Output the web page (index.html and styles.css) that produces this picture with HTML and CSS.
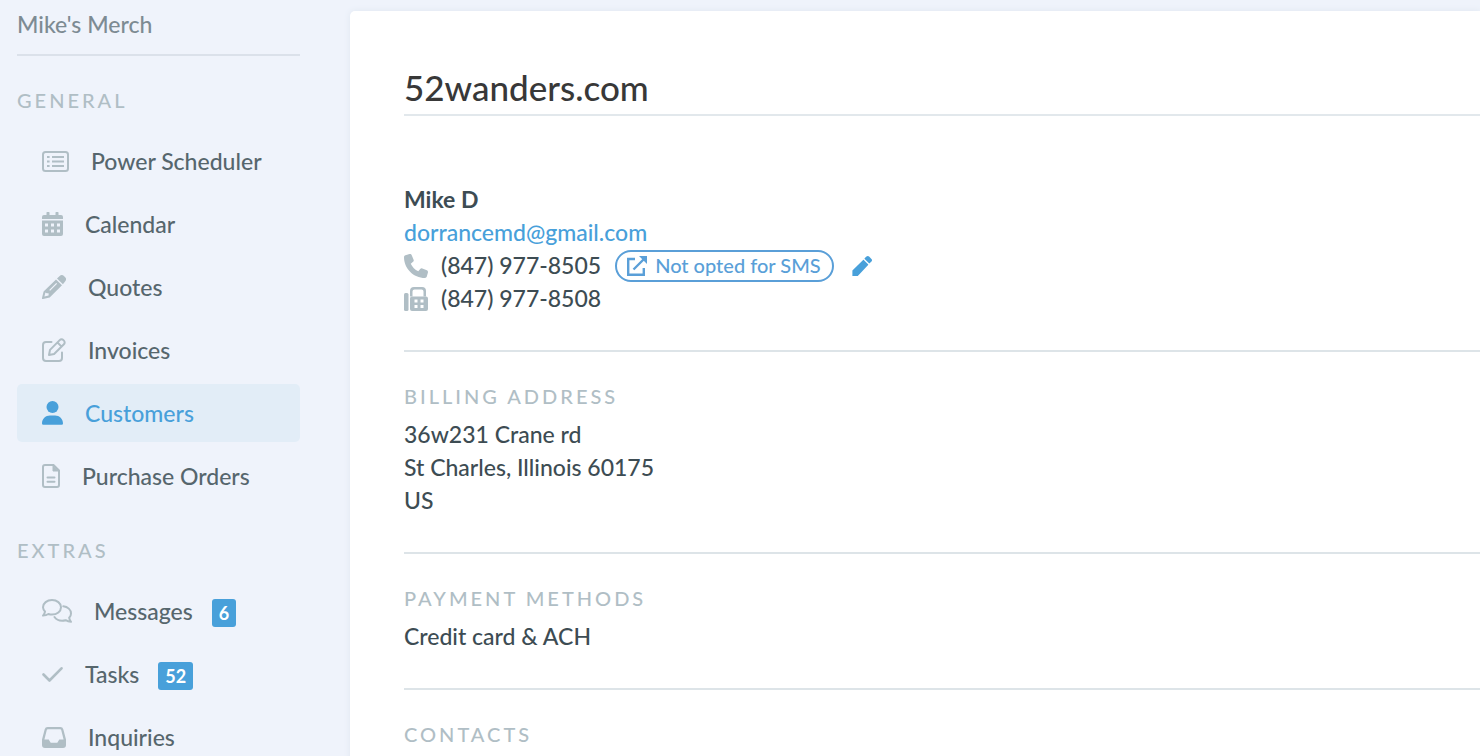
FILE: index.html
```html
<!DOCTYPE html>
<html lang="en">
<head>
<meta charset="utf-8">
<title>52wanders.com</title>
<link rel="stylesheet" href="styles.css">
</head>
<body>
<div class="app">
  <aside class="sidebar">
    <div class="brand">Mike's Merch</div>
    <nav class="nav">
      <h2 class="label">General</h2>
      <ul class="nav-list">
        <li><a class="nav-item" href="#">
          <svg class="icon" width="27" height="24" viewBox="0 0 27 24" fill="none" stroke="currentColor" stroke-width="2"><rect x="1" y="3" width="25" height="19" rx="2.5"/><path d="M10 8h12M10 12.500h12M10 17h12M5 8h2.600M5 12.500h2.600M5 17h2.600"/></svg>
          <span>Power Scheduler</span></a></li>
        <li><a class="nav-item" href="#">
          <svg class="icon" width="21" height="24" viewBox="0 0 21 24" fill="currentColor"><path fill-rule="evenodd" d="M4.500 1a1 1 0 0 1 3 0v2h6V1a1 1 0 0 1 3 0v2H19a2 2 0 0 1 2 2v2H0V5a2 2 0 0 1 2-2h2.500zM0 8.500h21V22a2 2 0 0 1-2 2H2a2 2 0 0 1-2-2zM3 11.500v3h3v-3zm6 0v3h3v-3zm6 0v3h3v-3zM3 17.500v3h3v-3zm6 0v3h3v-3zm6 0v3h3v-3z"/></svg>
          <span>Calendar</span></a></li>
        <li><a class="nav-item" href="#">
          <svg class="icon" width="24" height="24" viewBox="0 0 24 24" fill="currentColor"><path fill-rule="evenodd" d="M14 4.500 20 10.300 7.700 22.400 1 24a.9.9 0 0 1-1-1l1.600-6.600zM3.400 17.500l-1 4 4.200-1.100v-2.200H4.800zM7.200 14.900l.9.900 7-7-.9-.9z"/><path d="M15 3.500 17.400 1.200a3.400 3.400 0 0 1 4.800 0l.7.700a3.400 3.400 0 0 1 0 4.800L20.900 9.300z"/></svg>
          <span>Quotes</span></a></li>
        <li><a class="nav-item" href="#">
          <svg class="icon" width="24" height="24" viewBox="0 0 24 24" fill="none" stroke="currentColor" stroke-width="2" stroke-linecap="round" stroke-linejoin="round"><path d="M9.500 4H4a3 3 0 0 0-3 3v13a3 3 0 0 0 3 3h13a3 3 0 0 0 3-3v-5.500"/><path d="m7 17 1-5.100 9.700-9.800a2.600 2.600 0 0 1 3.700 0l.5.500a2.600 2.600 0 0 1 0 3.700L12.100 16zM15.500 4.500l4.100 4.100"/></svg>
          <span>Invoices</span></a></li>
        <li><a class="nav-item nav-item-active" href="#" aria-current="page">
          <svg class="icon" width="21" height="24" viewBox="0 0 21 24" fill="currentColor"><circle cx="10.500" cy="6" r="6"/><path d="M0 22.500C0 18 3.500 14.500 8 14.500h5c4.500 0 8 3.500 8 8a1.300 1.300 0 0 1-1.300 1.300H1.300A1.300 1.300 0 0 1 0 22.500z"/></svg>
          <span>Customers</span></a></li>
        <li><a class="nav-item" href="#">
          <svg class="icon" width="18" height="24" viewBox="0 0 18 24" fill="none" stroke="currentColor" stroke-width="2" stroke-linecap="round"><path d="M3 1h8.500L17 6.500V21a2 2 0 0 1-2 2H3a2 2 0 0 1-2-2V3a2 2 0 0 1 2-2zM5.500 13.500h7M5.500 17.700h7"/><path d="M11 1.500V7h5.500z" fill="currentColor" stroke-width="1"/></svg>
          <span>Purchase Orders</span></a></li>
      </ul>
      <h2 class="label">Extras</h2>
      <ul class="nav-list">
        <li><a class="nav-item" href="#">
          <svg class="icon" width="30" height="24" viewBox="0 0 30 24" fill="none" stroke="currentColor" stroke-width="2" stroke-linejoin="round" stroke-linecap="round"><path d="M10 1c5 0 9 3.200 9 7.300s-4 7.300-9 7.300a11 11 0 0 1-3.600-.6c-1.500 1-3.200 1.500-5.400 1.600 1.200-1.300 1.800-2.500 2-4A6.400 6.400 0 0 1 1 8.300C1 4.200 5 1 10 1z"/><path d="M21.300 7.300c4.400.4 7.700 3.400 7.700 7.100 0 1.700-.7 3.200-1.800 4.400.2 1.500.8 2.700 1.800 4-2.200-.1-3.900-.7-5.400-1.600-1.100.3-2.300.5-3.500.5-3.300 0-6.200-1.500-7.600-3.700"/></svg>
          <span>Messages</span><span class="count">6</span></a></li>
        <li><a class="nav-item" href="#">
          <svg class="icon" width="21" height="24" viewBox="0 0 21 24" fill="none" stroke="currentColor" stroke-width="2.600" stroke-linecap="round" stroke-linejoin="round"><path d="m1.500 12.500 6 6L19.500 6.300"/></svg>
          <span>Tasks</span><span class="count">52</span></a></li>
        <li><a class="nav-item" href="#">
          <svg class="icon" width="24" height="24" viewBox="0 0 24 24" fill="currentColor"><path fill-rule="evenodd" d="M5.600 2h12.800a3 3 0 0 1 2.900 2.200L24 14.500V20a3 3 0 0 1-3 3H3a3 3 0 0 1-3-3v-5.500L2.700 4.200A3 3 0 0 1 5.600 2zM5.800 4.200a1 1 0 0 0-1 .7L2.400 14.500h4.300l2 3.200h6.600l2-3.200h4.300L19.200 4.900a1 1 0 0 0-1-.7z"/></svg>
          <span>Inquiries</span></a></li>
      </ul>
    </nav>
  </aside>
  <main class="panel">
    <h1 class="title">52wanders.com</h1>
    <section class="contact">
      <div class="name">Mike D</div>
      <a class="email" href="mailto:dorrancemd@gmail.com">dorrancemd@gmail.com</a>
      <div class="contact-row">
        <svg class="icon" width="24" height="24" viewBox="0 0 512 512" fill="currentColor"><path d="M164.900 24.600c-7.700-18.600-28-28.500-47.400-23.200l-88 24C12.100 30.200 0 46 0 64c0 247.400 200.600 448 448 448 18 0 33.800-12.100 38.600-29.500l24-88c5.300-19.400-4.600-39.700-23.200-47.400l-96-40c-16.300-6.800-35.200-2.100-46.300 11.600L304.700 368C234.300 334.700 177.300 277.700 144 207.300L193.300 167c13.700-11.200 18.400-30 11.600-46.300z"/></svg>
        <span>(847) 977-8505</span>
        <button class="sms" type="button">
          <svg width="20" height="20" viewBox="0 0 20 20" fill="none" stroke="currentColor" stroke-width="2.400"><path d="M8 3H1.200v15.800h15.600V12M6.500 13.500 17 3"/><path d="M12 0h8v8z" fill="currentColor" stroke="none"/></svg>
          Not opted for SMS</button>
        <button class="edit" type="button" aria-label="Edit phone">
          <svg width="20" height="20" viewBox="0 0 512 512" fill="currentColor"><path d="m497.900 142.100-46.100 46.100c-4.700 4.700-12.300 4.700-17 0l-111-111c-4.700-4.700-4.700-12.300 0-17l46.100-46.100c18.700-18.700 49.100-18.700 67.900 0l60.100 60.100c18.800 18.700 18.800 49.100 0 67.900zM284.200 99.800 10 374v138h138l264.300-284.200c4.700-4.700 4.700-12.300 0-17l-111-111c-4.800-4.700-12.400-4.700-17.100 0z"/></svg>
        </button>
      </div>
      <div class="contact-row">
        <svg class="icon" width="24" height="24" viewBox="0 0 24 24" fill="currentColor"><rect y="6" width="4.500" height="18" rx="1.500"/><path d="M6 9.500V4a4 4 0 0 1 4-4h8a4 4 0 0 1 4 4v5.500h-2.500V4.500a2 2 0 0 0-2-2h-7a2 2 0 0 0-2 2v5z"/><path fill-rule="evenodd" d="M8 9.500h14a2 2 0 0 1 2 2V22a2 2 0 0 1-2 2H8a2 2 0 0 1-2-2V11.500a2 2 0 0 1 2-2zM10.500 12.500v3h3v-3zm6 0v3h3v-3zm-6 5.400v3h3v-3zm6 0v3h3v-3z"/></svg>
        <span>(847) 977-8508</span>
      </div>
    </section>
    <section class="block">
      <h2 class="label">Billing Address</h2>
      <p class="text">36w231 Crane rd<br>St Charles, Illinois 60175<br>US</p>
    </section>
    <section class="block">
      <h2 class="label">Payment Methods</h2>
      <p class="text">Credit card &amp; ACH</p>
    </section>
    <section class="block">
      <h2 class="label">Contacts</h2>
    </section>
  </main>
</div>
</body>
</html>
```
FILE: styles.css
```css
* { box-sizing: border-box; }
body {
  margin: 0;
  background: #eff3fb;
  color: #3d4c53;
  font-family: Lato, "Liberation Sans", sans-serif;
  font-size: 23px;
  font-weight: 500;
  line-height: 33px;
}
a { color: #48a0da; text-decoration: none; }
button { font: inherit; cursor: pointer; background: none; border: 0; padding: 0; }
.app { display: flex; min-height: 100vh; }
.sidebar { flex: 0 0 350px; padding: 8px 50px 0 17px; }
.brand {
  padding-bottom: 13px;
  border-bottom: 2px solid #dbe1ea;
  color: #7d8b93;
}
.label {
  margin: 0;
  color: #b0bec5;
  font-size: 20px;
  font-weight: 500;
  line-height: 28px;
  letter-spacing: 3px;
  text-transform: uppercase;
}
.nav { padding-top: 30px; }
.nav-list {
  display: flex;
  flex-direction: column;
  gap: 5px;
  margin: 18px 0 31px;
  padding: 0;
  list-style: none;
}
.nav-item {
  display: flex;
  align-items: center;
  height: 58px;
  padding-left: 25px;
  border-radius: 5px;
  color: #56666d;
}
.icon { flex: none; color: #b0bec5; }
.nav-item .icon { margin-right: 22px; }
.nav-item-active { background: #e2edf7; color: #48a0da; }
.nav-item-active .icon { color: #48a0da; }
.count {
  margin: 4px 0 0 19px;
  padding: 0 7px;
  border-radius: 3px;
  background: #48a0da;
  color: #fff;
  font-size: 18px;
  font-weight: 700;
  line-height: 28px;
}
.panel {
  flex: 1;
  min-width: 0;
  margin-top: 11px;
  padding: 54px 0 0 54px;
  border-radius: 5px 0 0 0;
  background: #fff;
  box-shadow: 0 0 6px #dfe7f0;
}
.title {
  margin: 0 0 67px;
  padding-bottom: 5px;
  border-bottom: 2px solid #e2e8ec;
  color: #383838;
  font-size: 35px;
  font-weight: 500;
  line-height: 44px;
}
.contact { padding-bottom: 35px; }
.name { font-weight: 700; }
.contact-row { display: flex; align-items: center; height: 33px; }
.contact-row .icon { margin-right: 13px; }
.email { display: block; }
.sms {
  display: flex;
  align-items: center;
  gap: 8px;
  height: 32px;
  margin-left: 14px;
  padding: 0 11px 0 10px;
  border: 2px solid #5a9fd8;
  border-radius: 16px;
  color: #5a9fd8;
  font-size: 20px;
}
.edit { display: flex; margin-left: 18px; color: #48a0da; }
.block { padding: 30px 0 35px; border-top: 2px solid #dde4e8; }
.text { margin: 8px 0 0; }
```
